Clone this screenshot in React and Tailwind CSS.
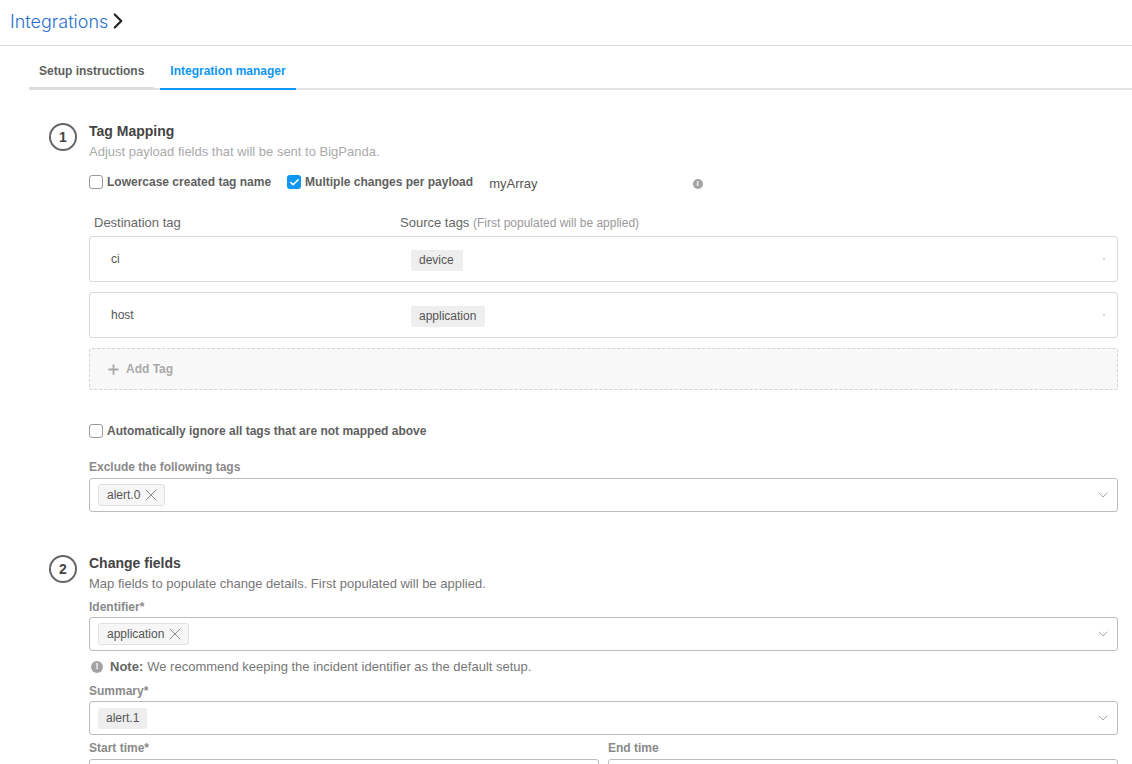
import React from 'react';
import { ChevronRight, ChevronDown, X, Plus, Check } from 'lucide-react';

const Step = ({ n }) => (
    <div className="w-7 h-7 shrink-0 rounded-full border-2 border-[#666] flex items-center justify-center text-[14px] font-bold text-[#444]">{n}</div>
);

const Checkbox = ({ checked, label }) => (
    <label className="flex items-center gap-[4px] text-[12px] font-bold text-[#5f5f5f]">
        {checked ? (
            <span className="w-[14px] h-[14px] rounded-[3px] bg-[#0d96f2] flex items-center justify-center">
                <Check size={11} strokeWidth={3.5} className="text-white" />
            </span>
        ) : (
            <span className="w-[14px] h-[14px] rounded-[3px] border border-[#999] bg-white" />
        )}
        {label}
    </label>
);

const Chip = ({ label }) => (
    <span className="h-[22px] pl-2 pr-[3px] flex items-center gap-px rounded-[3px] border border-[#e0e0e0] bg-[#f6f6f6] text-[12px] text-[#555]">
        {label}
        <X size={20} strokeWidth={1} className="text-[#777]" />
    </span>
);

const Select = ({ children }) => (
    <div className="h-[34px] flex items-center justify-between pl-2 pr-[6px] rounded-[3px] border border-[#bdbdbd] bg-white">
        <div className="flex items-center">{children}</div>
        <ChevronDown size={16} strokeWidth={1} className="text-[#777]" />
    </div>
);

const FieldLabel = ({ children, className = '' }) => (
    <div className={`text-[12px] font-bold text-[#8a8a8a] ${className}`}>{children}</div>
);

const TagRow = ({ name, tag }) => (
    <div className="h-[46px] flex items-center rounded-[3px] border border-[#d9d9d9] pr-[12px]">
        <span className="w-[321px] pl-[21px] text-[12px] text-[#555]">{name}</span>
        <span className="h-[21px] pl-2 pr-[9px] mt-[2px] flex items-center rounded-[2px] bg-[#eeeeee] text-[12px] text-[#555]">{tag}</span>
        <span className="ml-auto w-[2px] h-[2px] rounded-full bg-[#cfcfcf]" />
    </div>
);

export default function App() {
    return (
        <div className="w-[1132px] h-[764px] overflow-hidden bg-white font-['Liberation_Sans',Arial,sans-serif]">
            <header className="h-[46px] border-b border-[#d9d9d9] pl-[10px] flex items-center pb-[3px]">
                <span className="font-['Inter',sans-serif] font-light text-[18px] text-[#2a6fcf]">Integrations</span>
                <ChevronRight size={26} strokeWidth={2} className="text-[#222] -ml-[3px]" />
            </header>

            <nav className="ml-[29px] h-[44px] flex border-b-2 border-[#e2e2e2] text-[12px] font-bold">
                <div className="w-[125px] h-[44px] border-b-[3px] border-[#dcdcdc] pl-[10px] pt-[16px] text-[#5f5f5f]">Setup instructions</div>
                <div className="ml-[6px] w-[136px] h-[44px] border-b-2 border-[#0d96f2] text-center pt-[16px] text-[#0d96f2]">Integration manager</div>
            </nav>

            <section className="flex gap-[12px] pl-[49px] pr-[14px] pt-[33px]">
                <Step n="1" />
                <div className="flex-1 min-w-0">
                    <h2 className="text-[14px] leading-[16px] font-bold text-[#444]">Tag Mapping</h2>
                    <p className="mt-[5px] text-[13px] leading-[15px] text-[#aaaaaa]">Adjust payload fields that will be sent to BigPanda.</p>
                    <div className="mt-[11px] h-[24px] flex items-center">
                        <Checkbox label="Lowercase created tag name" />
                        <div className="ml-[16px]"><Checkbox checked label="Multiple changes per payload" /></div>
                        <span className="ml-[16px] mt-[4px] text-[13px] text-[#555]">myArray</span>
                        <span className="ml-[155px] mt-[3px] w-[10px] h-[10px] rounded-full bg-[#a3a3a3] flex items-center justify-center text-[8px] leading-none font-bold text-white">i</span>
                    </div>
                    <div className="mt-[21px] flex h-[16px] items-center text-[13px] text-[#666]">
                        <span className="w-[311px] pl-[5px]">Destination tag</span>
                        <span>Source tags <span className="text-[12px] text-[#999]">(First populated will be applied)</span></span>
                    </div>
                    <div className="mt-[5px] flex flex-col gap-[10px]">
                        <TagRow name="ci" tag="device" />
                        <TagRow name="host" tag="application" />
                        <div className="h-[42px] flex items-center gap-[5px] pl-[16px] rounded-[3px] border border-dashed border-[#d4d4d4] bg-[#f8f8f8] text-[12px] font-bold text-[#aaaaaa]">
                            <Plus size={15} strokeWidth={3} />
                            Add Tag
                        </div>
                    </div>
                    <div className="mt-[32px]">
                        <Checkbox label="Automatically ignore all tags that are not mapped above" />
                    </div>
                    <FieldLabel className="mt-[18px] mb-[2px]">Exclude the following tags</FieldLabel>
                    <Select><Chip label="alert.0" /></Select>
                </div>
            </section>

            <section className="flex gap-[12px] pl-[49px] pr-[14px] pt-[43px]">
                <Step n="2" />
                <div className="flex-1 min-w-0">
                    <h2 className="text-[14px] leading-[16px] font-bold text-[#444]">Change fields</h2>
                    <p className="mt-[5px] text-[13px] leading-[15px] text-[#777]">Map fields to populate change details. First populated will be applied.</p>
                    <FieldLabel className="mt-[7px] mb-px">Identifier*</FieldLabel>
                    <Select><Chip label="application" /></Select>
                    <div className="mt-[8px] h-[15px] flex items-center text-[13px] text-[#777] pl-[2px]">
                        <span className="w-[12px] h-[12px] rounded-full bg-[#a3a3a3] flex items-center justify-center text-[9px] leading-none font-bold text-white mr-[7px]">!</span>
                        <b className="text-[#666] mr-[4px]">Note:</b>We recommend keeping the incident identifier as the default setup.
                    </div>
                    <FieldLabel className="mt-[8px] mb-px">Summary*</FieldLabel>
                    <Select>
                        <span className="h-[21px] px-2 flex items-center rounded-[2px] bg-[#eeeeee] text-[12px] text-[#555]">alert.1</span>
                    </Select>
                    <div className="mt-[4px] grid grid-cols-2 gap-[9px]">
                        <div>
                            <FieldLabel className="mb-[2px]">Start time*</FieldLabel>
                            <div className="h-[34px] rounded-[3px] border border-[#bdbdbd]" />
                        </div>
                        <div>
                            <FieldLabel className="mb-[2px]">End time</FieldLabel>
                            <div className="h-[34px] rounded-[3px] border border-[#bdbdbd]" />
                        </div>
                    </div>
                </div>
            </section>
        </div>
    );
}
